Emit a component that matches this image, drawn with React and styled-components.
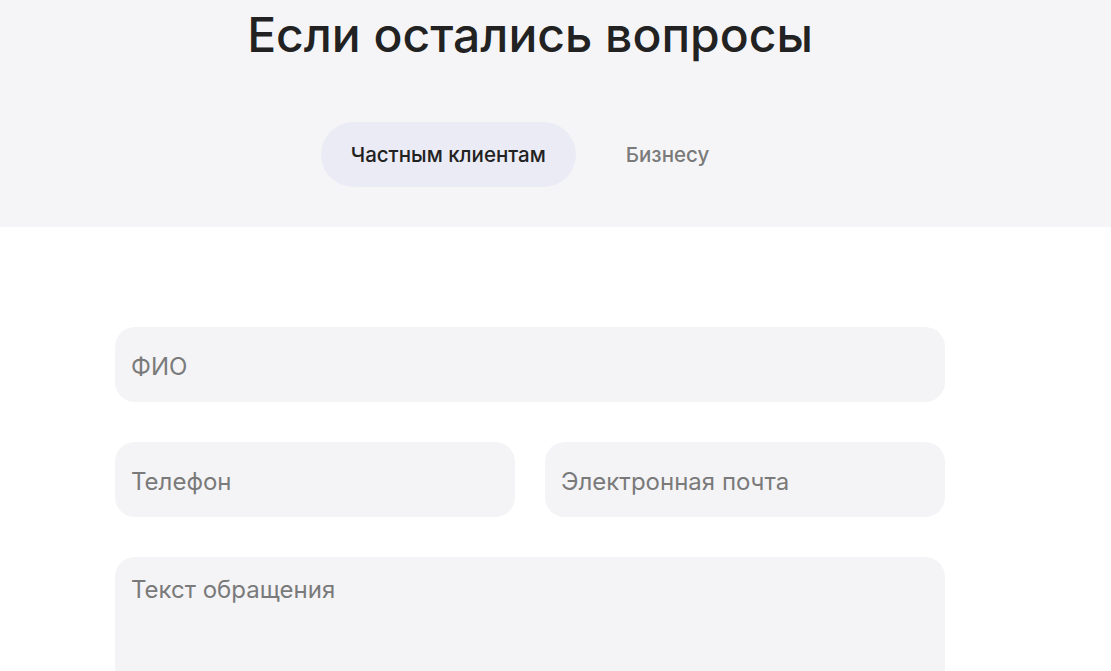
import React, { useState } from "react";
import styled, { createGlobalStyle } from "styled-components";

const GlobalStyle = createGlobalStyle`
  body {
    margin: 0;
    background: #ffffff;
    font-family: Inter, "Noto Sans", sans-serif;
    color: #222222;
  }
`;

const Header = styled.section`
  background: #f5f5f7;
  height: 227px;
  padding-right: 51px;
  display: flex;
  flex-direction: column;
  align-items: center;
`;

const Title = styled.h2`
  margin: 6px 0 0;
  font-size: 48px;
  font-weight: 500;
  line-height: 58px;
  color: #222222;
`;

const Tabs = styled.div`
  margin-top: 58px;
  display: flex;
  gap: 20px;
`;

const Tab = styled.button`
  border: 0;
  height: 65px;
  padding: 0 30px;
  border-radius: 33px;
  font-family: inherit;
  font-size: 20.5px;
  font-weight: 500;
  cursor: pointer;
  background: ${p => (p.$active ? "#ebebf5" : "transparent")};
  color: ${p => (p.$active ? "#222222" : "#7a7a7a")};
`;

const Body = styled.div`
  padding-right: 51px;
`;

const Form = styled.form`
  width: 830px;
  margin: 100px auto 0;
  display: flex;
  flex-direction: column;
  gap: 40px;
`;

const Row = styled.div`
  display: grid;
  grid-template-columns: 1fr 1fr;
  gap: 30px;
`;

const Field = styled.input`
  box-sizing: border-box;
  width: 100%;
  height: 75px;
  border: 0;
  border-radius: 20px;
  background: #f4f4f6;
  padding: 3px 16px 0;
  font-family: inherit;
  font-size: 24px;
  color: #222222;
  outline: none;
  &::placeholder {
    color: #7a7a7a;
  }
`;

const Area = styled.textarea`
  box-sizing: border-box;
  width: 100%;
  height: 180px;
  border: 0;
  border-radius: 20px;
  background: #f4f4f6;
  padding: 18px 16px;
  font-family: inherit;
  font-size: 24px;
  resize: none;
  outline: none;
  &::placeholder {
    color: #7a7a7a;
  }
`;

export default function App() {
  const [tab, setTab] = useState("private");
  return (
    <>
      <GlobalStyle />
      <Header>
        <Title>Если остались вопросы</Title>
        <Tabs>
          <Tab type="button" $active={tab === "private"} onClick={() => setTab("private")}>
            Частным клиентам
          </Tab>
          <Tab type="button" $active={tab === "business"} onClick={() => setTab("business")}>
            Бизнесу
          </Tab>
        </Tabs>
      </Header>
      <Body>
        <Form>
          <Field placeholder="ФИО" />
          <Row>
            <Field placeholder="Телефон" />
            <Field placeholder="Электронная почта" />
          </Row>
          <Area placeholder="Текст обращения" />
        </Form>
      </Body>
    </>
  );
}
